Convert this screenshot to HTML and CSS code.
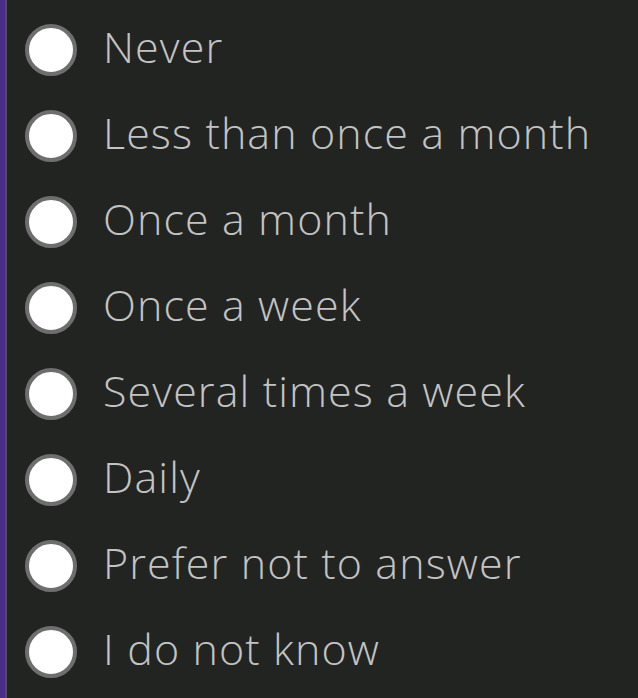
FILE: index.html
```html
<!DOCTYPE html>
<html lang="en">
<head>
  <meta charset="UTF-8" />
  <meta name="viewport" content="width=device-width, initial-scale=1" />
  <title>Frequency</title>
  <link rel="stylesheet" href="styles.css">
</head>
<body>
  <div class="question">
    <label class="option"><input type="radio" name="freq"><span>Never</span></label>
    <label class="option"><input type="radio" name="freq"><span>Less than once a month</span></label>
    <label class="option"><input type="radio" name="freq"><span>Once a month</span></label>
    <label class="option"><input type="radio" name="freq"><span>Once a week</span></label>
    <label class="option"><input type="radio" name="freq"><span>Several times a week</span></label>
    <label class="option"><input type="radio" name="freq"><span>Daily</span></label>
    <label class="option"><input type="radio" name="freq"><span>Prefer not to answer</span></label>
    <label class="option"><input type="radio" name="freq"><span>I do not know</span></label>
  </div>
</body>
</html>
```

FILE: styles.css
```css
html, body {
  margin: 0;
  padding: 0;
  height: 100%;
  background-color: #222422;
}

body {
  font-family: "Open Sans", "Noto Sans", sans-serif;
}

.question {
  min-height: 100%;
  box-sizing: border-box;
  border-left: 5px solid #4a2d88;
  box-shadow: inset 2px 0 0 #4e504e;
  padding-top: 7px;
  padding-left: 20px;
}

.option {
  display: flex;
  align-items: center;
  height: 86px;
  gap: 26px;
  cursor: pointer;
}

.option input {
  appearance: none;
  -webkit-appearance: none;
  margin: 0;
  width: 52px;
  height: 52px;
  flex-shrink: 0;
  border-radius: 50%;
  background: #fff;
  border: 4px solid #6e6e6e;
  box-sizing: border-box;
}

.option span {
  font-size: 43px;
  font-weight: 300;
  letter-spacing: 1.1px;
  color: #c3c3c3;
  white-space: nowrap;
  margin-top: -8px;
}
```
